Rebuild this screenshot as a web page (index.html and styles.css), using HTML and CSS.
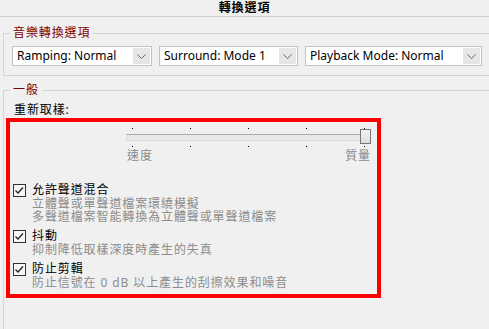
FILE: index.html
```html
<!DOCTYPE html>
<html lang="zh-Hant">
<head>
    <meta charset="UTF-8">
    <meta name="viewport" content="width=device-width, initial-scale=1.0">
    <title>轉換選項</title>
    <link rel="stylesheet" href="styles.css">
</head>
<body>
    <div class="titlebar">轉換選項</div>

    <fieldset class="group">
        <legend>音樂轉換選項</legend>
        <div class="combos">
            <div class="combo combo-ramp">
                <span class="combo-text">Ramping: Normal</span>
                <span class="arrow"><svg width="9" height="5"><path d="M0.5 0.5 L4.5 4.5 L8.5 0.5" fill="none" stroke="#6b6b6b"/></svg></span>
            </div>
            <div class="combo combo-surround">
                <span class="combo-text">Surround: Mode 1</span>
                <span class="arrow"><svg width="9" height="5"><path d="M0.5 0.5 L4.5 4.5 L8.5 0.5" fill="none" stroke="#6b6b6b"/></svg></span>
            </div>
            <div class="combo combo-playback">
                <span class="combo-text">Playback Mode: Normal</span>
                <span class="arrow"><svg width="9" height="5"><path d="M0.5 0.5 L4.5 4.5 L8.5 0.5" fill="none" stroke="#6b6b6b"/></svg></span>
            </div>
        </div>
    </fieldset>

    <fieldset class="group general">
        <legend>一般</legend>
        <div class="field-label">重新取樣:</div>

        <div class="highlight">
            <div class="slider">
                <div class="ticks"><i></i><i></i><i></i><i></i><i></i></div>
                <div class="track"><div class="thumb"></div></div>
                <div class="ticks"><i></i><i></i><i></i><i></i><i></i></div>
                <div class="slider-labels"><span>速度</span><span>質量</span></div>
            </div>

            <div class="option">
                <svg class="check" width="13" height="13"><rect x="0.5" y="0.5" width="12" height="12" fill="#f6f6f6" stroke="#333"/><path d="M2.5 6.5 L5 9 L10 3.5" fill="none" stroke="#222" stroke-width="1.3"/></svg>
                <div class="option-text">
                    <div class="option-title">允許聲道混合</div>
                    <div class="option-desc">立體聲或單聲道檔案環繞模擬</div>
                    <div class="option-desc">多聲道檔案智能轉換為立體聲或單聲道檔案</div>
                </div>
            </div>

            <div class="option">
                <svg class="check" width="13" height="13"><rect x="0.5" y="0.5" width="12" height="12" fill="#f6f6f6" stroke="#333"/><path d="M2.5 6.5 L5 9 L10 3.5" fill="none" stroke="#222" stroke-width="1.3"/></svg>
                <div class="option-text">
                    <div class="option-title">抖動</div>
                    <div class="option-desc">抑制降低取樣深度時產生的失真</div>
                </div>
            </div>

            <div class="option">
                <svg class="check" width="13" height="13"><rect x="0.5" y="0.5" width="12" height="12" fill="#f6f6f6" stroke="#333"/><path d="M2.5 6.5 L5 9 L10 3.5" fill="none" stroke="#222" stroke-width="1.3"/></svg>
                <div class="option-text">
                    <div class="option-title">防止剪輯</div>
                    <div class="option-desc">防止信號在 0 dB 以上產生的刮擦效果和噪音</div>
                </div>
            </div>
        </div>
    </fieldset>
</body>
</html>
```

FILE: styles.css
```css
html, body {
    margin: 0;
    height: 100%;
    overflow: hidden;
}
body {
    background-color: #f0f0f0;
    font-family: "Noto Sans", "Noto Sans CJK TC", sans-serif;
    font-size: 12px;
    letter-spacing: 0.9px;
    color: #000;
}
.titlebar {
    height: 16px;
    line-height: 16px;
    text-align: center;
    font-weight: bold;
    border-bottom: 1px solid #cfcfcf;
}
.group {
    margin: 8px -30px 0 3px;
    padding: 5px 0 9px 8px;
    border: 1px solid #d5d5d5;
    min-width: 0;
}
.group legend {
    margin-left: -2px;
    padding: 0 3px;
    line-height: 16px;
    color: #800000;
}
.combos {
    display: flex;
    gap: 7px;
}
.combo {
    display: flex;
    box-sizing: border-box;
    height: 20px;
    padding: 1px;
    border: 1px solid #c2c2c2;
    background-color: #fff;
}
.combo-ramp { width: 140px; }
.combo-surround { width: 139px; }
.combo-playback { width: 177px; }
.combo-text {
    flex: 1;
    padding-left: 3px;
    line-height: 16px;
    letter-spacing: 0;
    white-space: nowrap;
}
.arrow {
    width: 17px;
    display: flex;
    align-items: center;
    justify-content: center;
    background-color: #e6e6e6;
}
.general {
    margin-top: 6px;
    padding: 4px 0 60px 0;
}
.general legend {
    margin-left: 6px;
}
.field-label {
    margin-left: 10px;
    line-height: 16px;
}
.highlight {
    margin-left: 2px;
    width: 375px;
    box-sizing: border-box;
    height: 180px;
    border: 4px solid #ff0000;
}
.slider {
    margin-left: 116px;
    width: 245px;
    padding-top: 6px;
}
.ticks {
    display: flex;
    justify-content: space-between;
    padding: 0 6px;
    height: 1px;
}
.ticks i {
    width: 1px;
    height: 1px;
    background-color: #000;
}
.track {
    position: relative;
    margin: 5px 0;
    box-sizing: border-box;
    height: 7px;
    border: 1px solid #d8d8d8;
    border-top-color: #acacac;
    background-color: #e8e8e8;
}
.thumb {
    position: absolute;
    right: -1px;
    top: -6px;
    width: 11px;
    height: 15px;
    box-sizing: border-box;
    border: 1px solid #777;
    background: linear-gradient(#f4f4f4, #dcdcdc);
}
.slider-labels {
    display: flex;
    justify-content: space-between;
    padding: 0 0 0 1px;
    margin-top: 1px;
    line-height: 15px;
    color: #8a8a8a;
}
.option {
    display: flex;
    gap: 6px;
    padding-left: 3px;
    margin-top: 6px;
}
.slider + .option {
    margin-top: 20px;
}
.check {
    margin-top: 1px;
    flex-shrink: 0;
}
.option-title {
    line-height: 14px;
}
.option-desc {
    line-height: 13px;
    color: #8c8c8c;
}
```
